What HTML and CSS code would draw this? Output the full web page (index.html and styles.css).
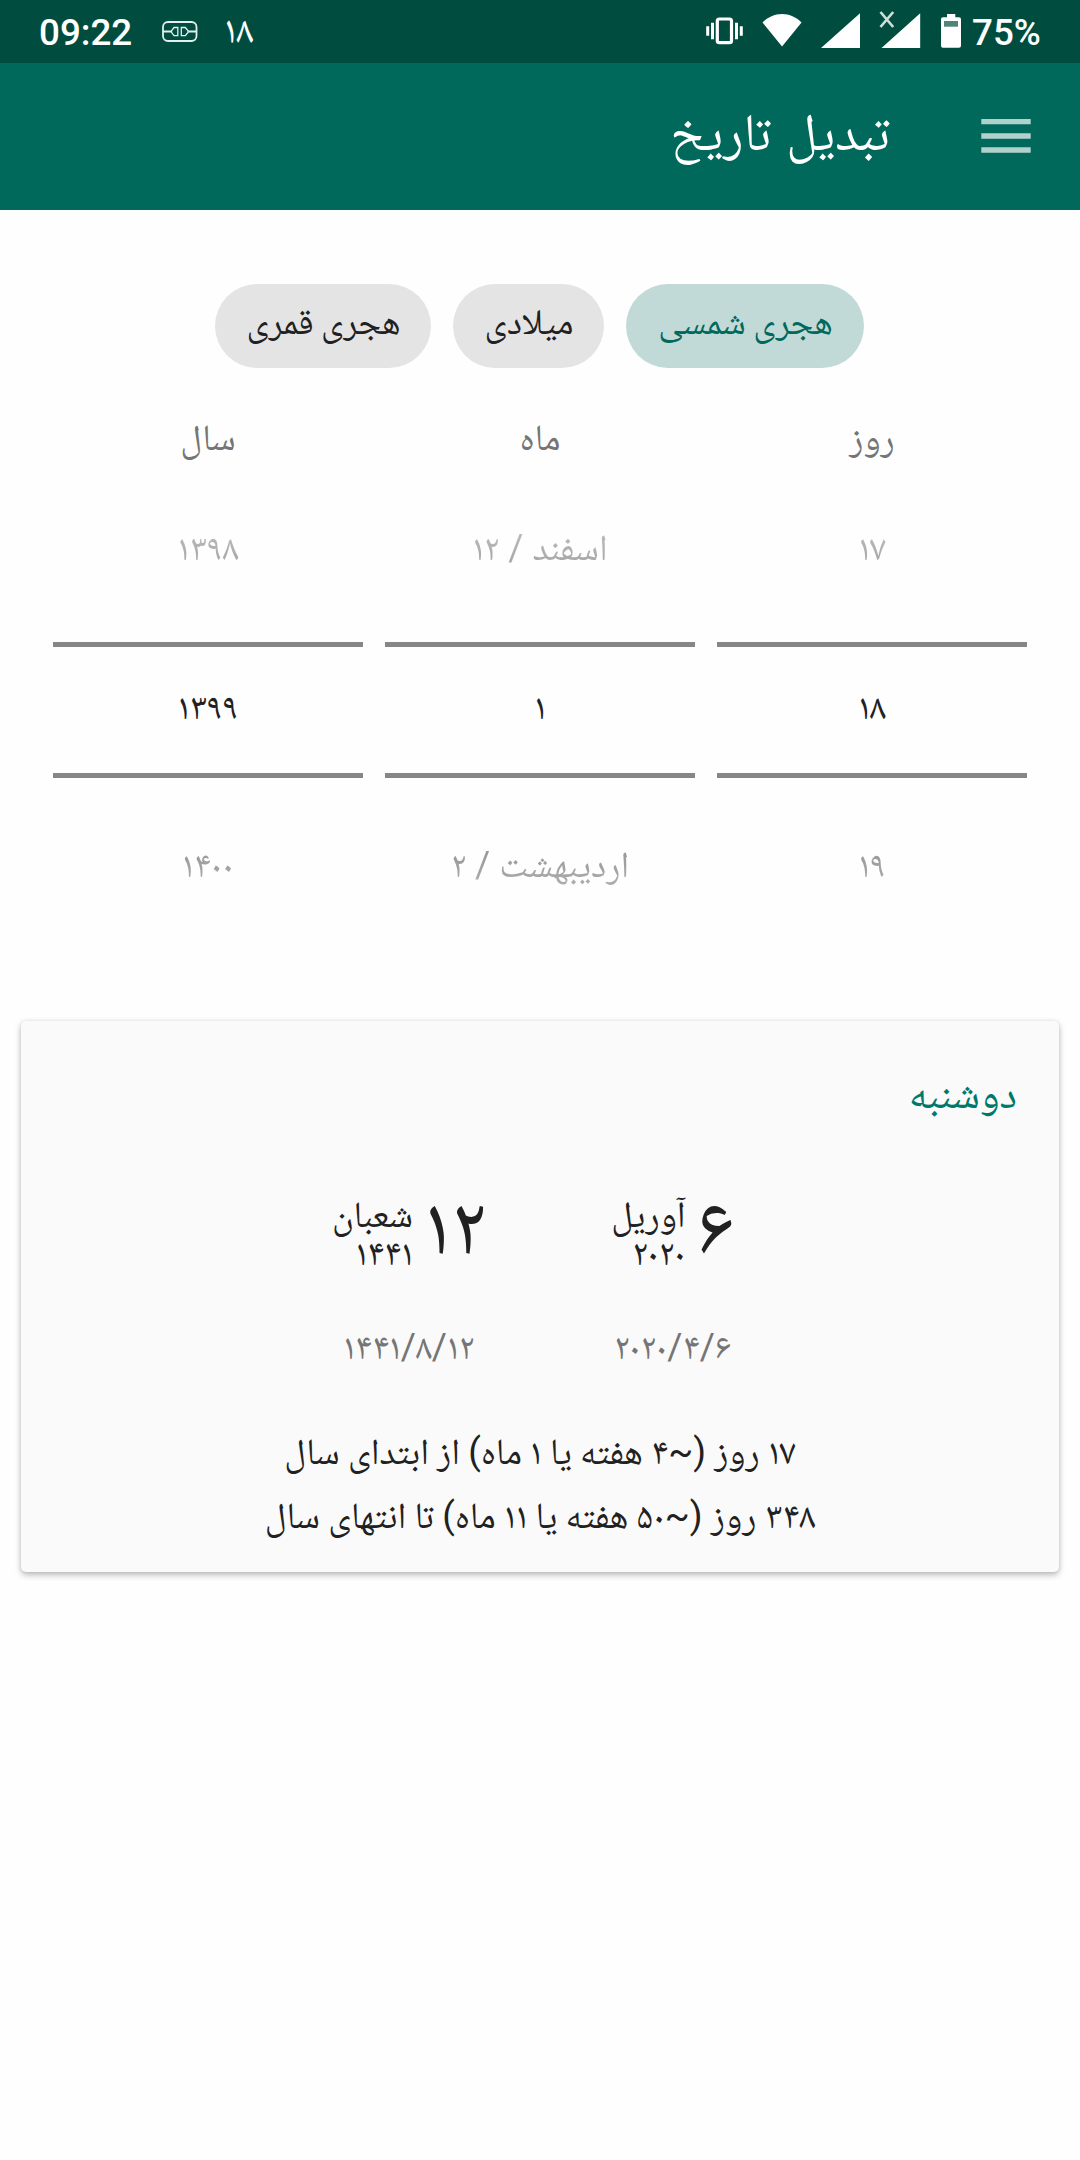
FILE: index.html
```
<!DOCTYPE html>
<html lang="fa" dir="rtl">
<head>
<meta charset="utf-8">
<title>تبدیل تاریخ</title>
<link rel="stylesheet" href="styles.css">
</head>
<body>
<div class="status" dir="ltr">
  <span class="clock">09:22</span>
  <svg class="vpn" width="36" height="63" viewBox="0 0 36 63" fill="none" stroke="#e4eeec" stroke-width="1.8">
    <rect x="1" y="22" width="33.5" height="19" rx="5"/>
    <path d="M1 31.5h8.500M26 31.5h8.500"/>
    <path stroke-width="1.3" d="M9.500 30.800l2.500-3.300h3.800v8.200h-3.800l-2.500-3.300zM19.300 26.800v9M19.300 27.500h4l2.700 3.300v1.600l-2.700 3.300h-4z"/>
  </svg>
  <span class="day">۱۸</span>
  <svg class="vibrate" width="38" height="63" viewBox="0 0 38 63" fill="none" stroke="#fff">
    <rect x="11.300" y="19" width="14.200" height="23.700" rx="2" stroke-width="3.200"/>
    <path stroke-width="3" d="M6.500 22.700v16.500M30.500 22.700v16.500M1.700 26.300v9.500M35.300 26.300v9.500"/>
  </svg>
  <svg class="wifi" width="40" height="63" viewBox="0 0 40 63" fill="#fff"><path d="M20 46.500L.5 22.500C6 17 12.500 14 20 14s14 3 19.500 8.500z"/></svg>
  <svg class="sig" width="39" height="63" viewBox="0 0 39 63" fill="#fff"><path d="M0 48L39 13.300V48z"/></svg>
  <svg class="sig2" width="42" height="63" viewBox="0 0 42 63" fill="#fff"><path d="M2.500 48L41.200 13.300V48z"/><path stroke="#cfdedb" stroke-width="2.700" d="M1.500 12l12.700 15M14.200 12L1.500 27"/></svg>
  <svg class="battery" width="20" height="63" viewBox="0 0 20 63"><path fill="#fff" d="M6 14h8.300v3.300H18a2 2 0 0 1 2 2V45.700a2 2 0 0 1-2 2H2a2 2 0 0 1-2-2V19.300a2 2 0 0 1 2-2h4z"/><path fill="#4f8579" d="M3 21h14v5.700H3z"/></svg>
  <span class="percent">75%</span>
</div>
<header class="appbar">
  <svg class="menu" width="50" height="34" viewBox="0 0 50 34" fill="#b2d1cd"><path d="M.3 0h49.400v5.300H.3zM.3 14.200h49.400v5.500H.3zM.3 28.300h49.400v5.500H.3z"/></svg>
  <h1 class="title">تبدیل تاریخ</h1>
</header>
<main>
  <div class="chips">
    <span class="chip chip-on">هجری شمسی</span>
    <span class="chip chip-mid">میلادی</span>
    <span class="chip chip-end">هجری قمری</span>
  </div>
  <div class="pickers">
    <div class="picker">
      <div class="label">روز</div>
      <div class="prev tight">۱۷</div>
      <div class="current tight">۱۸</div>
      <div class="next tight">۱۹</div>
    </div>
    <div class="picker">
      <div class="label">ماه</div>
      <div class="prev">اسفند <span class="mark">/</span> ۱۲</div>
      <div class="current">۱</div>
      <div class="next">اردیبهشت <span class="mark">/</span> ۲</div>
    </div>
    <div class="picker">
      <div class="label">سال</div>
      <div class="prev">۱۳۹۸</div>
      <div class="current">۱۳۹۹</div>
      <div class="next">۱۴۰۰</div>
    </div>
  </div>
  <section class="card">
    <h2 class="weekday">دوشنبه</h2>
    <div class="dates">
      <div class="date">
        <div class="full"><span class="num">۶</span><span class="month">آوریل<br>۲۰۲۰</span></div>
        <div class="short">۲۰۲۰<span class="mark">/</span>۴<span class="mark">/</span>۶</div>
      </div>
      <div class="date">
        <div class="full"><span class="num">۱۲</span><span class="month">شعبان<br>۱۴۴۱</span></div>
        <div class="short">۱۴۴۱<span class="mark">/</span>۸<span class="mark">/</span>۱۲</div>
      </div>
    </div>
    <p class="summary">۱۷ روز <span class="mark">(~</span>۴ هفته یا ۱ ماه<span class="mark">)</span> از ابتدای سال<br>۳۴۸ روز <span class="mark">(~</span>۵۰ هفته یا ۱۱ ماه<span class="mark">)</span> تا انتهای سال</p>
  </section>
</main>
</body>
</html>
```
FILE: styles.css
```
* { box-sizing: border-box; }
body {
  margin: 0;
  min-height: 2160px;
  background: #fefefe;
  color: #212121;
  font: 36.75px/50px Roboto, "Noto Naskh Arabic UI", "Noto Naskh Arabic", sans-serif;
}
svg { display: block; flex: none; }
.status {
  height: 63px;
  display: flex;
  background: #004d40;
  color: #fff;
  line-height: 66px;
}
.clock, .percent { font-weight: 500; }
.clock { width: 123px; padding-left: 39px; }
.vpn { margin-left: 39px; }
.day { margin-left: 26px; width: 32px; font-size: 39px; line-height: 71px; letter-spacing: 1.5px; }
.vibrate { margin-left: 450px; }
.wifi { margin-left: 18px; }
.sig { margin-left: 19px; }
.sig2 { margin-left: 19px; }
.battery { margin-left: 20px; }
.percent { margin-left: 11px; }
.appbar {
  height: 147px;
  display: flex;
  align-items: center;
  padding-right: 49px;
  background: #00695c;
}
.menu { margin-bottom: 2px; }
.title {
  margin: 4px 91px 0 0;
  color: #fff;
  font-size: 52.5px;
  line-height: 70px;
  font-weight: 400;
  word-spacing: 2px;
}
.chips {
  display: flex;
  justify-content: center;
  gap: 22px;
  padding: 74px 2px 0 0;
}
.chip {
  width: 238px;
  height: 84px;
  padding: 5px 0 0 2px;
  border-radius: 42px;
  background: #e4e4e4;
  font-size: 36.2px;
  line-height: 75px;
  word-spacing: -1.5px;
  text-align: center;
}
.chip-on { background: #c2dad7; color: #00695c; }
.chip-mid { width: 151px; }
.chip-end { width: 216px; }
.pickers {
  display: grid;
  grid-template-columns: repeat(3, 310px);
  justify-content: center;
  gap: 22px;
  margin-top: 45px;
  text-align: center;
}
.label { height: 71px; padding-top: 5px; color: #757575; }
.prev, .next {
  height: 158px;
  color: transparent;
  background-clip: text;
  -webkit-background-clip: text;
}
.prev { padding-top: 44px; background-image: linear-gradient(#c4c4c4 35px, #a0a0a0 90px); }
.next { padding-top: 67px; background-image: linear-gradient(#969696 70px, #bcbcbc 130px); }
.current {
  height: 136px;
  padding-top: 40px;
  border-top: 5px solid #868686;
  border-bottom: 5px solid #868686;
}
.tight { letter-spacing: 1.5px; }
/* Latin punctuation sits lower than the Naskh glyphs, so lift it */
.mark { line-height: 0; vertical-align: 5px; }
.card {
  width: 1038px;
  height: 551px;
  margin: 85px auto 0;
  padding-top: 49px;
  border-radius: 5px;
  background: #fafafa;
  box-shadow: 0 3px 6px rgba(0, 0, 0, .26), 0 0 4px rgba(0, 0, 0, .08);
}
.weekday {
  margin: 0;
  padding-right: 42px;
  color: #00796b;
  font-size: 42px;
  line-height: 60px;
  font-weight: 400;
}
.dates {
  display: flex;
  justify-content: center;
  gap: 54px;
  margin-top: 71px;
  padding-left: 1px;
}
.date { width: 210px; text-align: center; }
.full {
  display: flex;
  justify-content: center;
  gap: 11px;
  height: 75px;
}
.num { font-size: 84px; line-height: 72px; letter-spacing: 1.5px; }
.month { line-height: 37.5px; text-align: right; }
.short { margin-top: 51px; color: #757575; }
.summary {
  margin: 48px 0 0;
  text-align: center;
  line-height: 63.5px;
  word-spacing: -.9px;
}
```
